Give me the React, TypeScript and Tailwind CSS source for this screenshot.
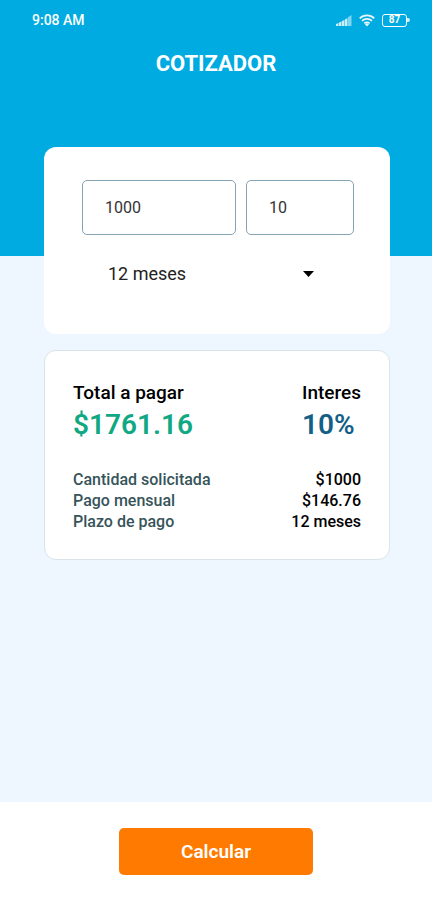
import { useState } from "react";
import type { FormEvent } from "react";

interface Quote {
  total: string;
  interest: string;
  amount: string;
  monthly: string;
  months: string;
}

const initialQuote: Quote = {
  total: "1761.16",
  interest: "10",
  amount: "1000",
  monthly: "146.76",
  months: "12",
};

const terms = ["3", "6", "12", "24"];

function StatusBar() {
  return (
    <div className="flex h-10 items-center justify-between pl-8 pr-[22px] text-white">
      <span className="text-sm font-medium leading-5">9:08 AM</span>
      <div className="flex items-center gap-[7px]">
        {/* Signal */}
        <svg width="16" height="11" viewBox="0 0 16 11" fill="currentColor" aria-hidden="true">
          <path d="M0 9l2.5-1v3H0zM3 7.5l2.5-1V11H3zM6 6l2.5-1v6H6zM9 4.2l2.5-1V11H9z" opacity="0.8" />
          <path d="M12 2.2L15.5 0v11H12z" opacity="0.5" />
        </svg>

        {/* Wifi */}
        <svg width="16" height="13" viewBox="0 0 16 13" fill="none" stroke="currentColor" strokeWidth="1.8" opacity="0.9" aria-hidden="true">
          <path d="M.7 4.3a10.5 10.5 0 0 1 14.6 0M3 6.9a7.2 7.2 0 0 1 10 0M5.3 9.4a3.9 3.9 0 0 1 5.4 0" />
          <path d="M5.9 10.2a3 3 0 0 1 4.2 0L8 12.6z" fill="currentColor" stroke="none" />
        </svg>

        {/* Battery */}
        <div className="flex items-center">
          <span className="flex h-[13px] w-[25px] items-center justify-center rounded-[3px] border border-white text-[10px] font-bold leading-none">
            87
          </span>
          <span className="h-1 w-[3px] rounded-r-sm bg-white/80" />
        </div>
      </div>
    </div>
  );
}

export default function App() {
  const [amount, setAmount] = useState("1000");
  const [interest, setInterest] = useState("10");
  const [months, setMonths] = useState("12");
  const [quote, setQuote] = useState(initialQuote);

  const handleSubmit = (e: FormEvent) => {
    e.preventDefault();
    const rate = Number(interest) / 100;
    const n = Number(months);
    const value = Number(amount);
    const monthly = rate === 0 ? value / n : value / ((1 - Math.pow(rate + 1, -n)) / rate);
    setQuote({
      total: (monthly * n).toFixed(2),
      interest,
      amount,
      monthly: monthly.toFixed(2),
      months,
    });
  };

  const details = [
    { label: "Cantidad solicitada", value: `$${quote.amount}` },
    { label: "Pago mensual", value: `$${quote.monthly}` },
    { label: "Plazo de pago", value: `${quote.months} meses` },
  ];

  return (
    <div className="flex min-h-screen flex-col bg-[#eef7ff] font-[Roboto,sans-serif] text-black">
      <header className="h-64 bg-[#00abe1]">
        <StatusBar />
        <h1 className="mt-2 text-center text-[22px] font-bold leading-8 text-white">COTIZADOR</h1>
      </header>

      <main className="-mt-[109px] flex-1 space-y-4 pb-6 pl-11 pr-[42px]">
        <form id="quote-form" onSubmit={handleSubmit} className="rounded-xl bg-white pb-[34px] pl-[38px] pr-9 pt-[33px]">
          <div className="grid grid-cols-[10fr_7fr] gap-[10px]">
            <input
              type="text"
              inputMode="numeric"
              aria-label="Cantidad"
              value={amount}
              onChange={(e) => setAmount(e.target.value)}
              className="h-[55px] w-full min-w-0 rounded-[5px] border border-[#86a3b3] px-[22px] text-base text-[#333]"
            />
            <input
              type="text"
              inputMode="numeric"
              aria-label="Interes %"
              value={interest}
              onChange={(e) => setInterest(e.target.value)}
              className="h-[55px] w-full min-w-0 rounded-[5px] border border-[#86a3b3] px-[22px] text-base text-[#333]"
            />
          </div>
          <div className="relative mt-[13px]">
            <select
              aria-label="Plazo"
              value={months}
              onChange={(e) => setMonths(e.target.value)}
              className="h-[52px] w-full appearance-none bg-transparent pl-[26px] pr-12 text-lg text-[#222]"
            >
              {terms.map((term) => (
                <option key={term} value={term}>
                  {term} meses
                </option>
              ))}
            </select>
            <svg
              width="11"
              height="6"
              viewBox="0 0 11 6"
              className="pointer-events-none absolute right-10 top-[23px]"
              aria-hidden="true"
            >
              <path d="M0 0h11L5.5 6z" />
            </svg>
          </div>
        </form>

        <section className="rounded-xl border border-[#d9e4ea] bg-white px-7 pb-[27px] pt-[30px]">
          <div className="flex justify-between">
            <div>
              <h2 className="text-[19px] font-medium leading-6">Total a pagar</h2>
              <p className="text-[28px] font-semibold leading-10 text-[#0fa883]">${quote.total}</p>
            </div>
            <div>
              <h2 className="text-[19px] font-medium leading-6">Interes</h2>
              <p className="text-[28px] font-semibold leading-10 text-[#145f87]">{quote.interest}%</p>
            </div>
          </div>
          <dl className="mt-6">
            {details.map(({ label, value }) => (
              <div key={label} className="flex justify-between text-base font-medium leading-[21px]">
                <dt className="text-[#36545a]">{label}</dt>
                <dd>{value}</dd>
              </div>
            ))}
          </dl>
        </section>
      </main>

      <footer className="flex justify-center bg-white pb-[25px] pt-[26px]">
        <button
          type="submit"
          form="quote-form"
          className="h-[47px] w-[45%] rounded-[5px] bg-[#ff7a00] pt-0.5 text-[19px] font-semibold text-white"
        >
          Calcular
        </button>
      </footer>
    </div>
  );
}
